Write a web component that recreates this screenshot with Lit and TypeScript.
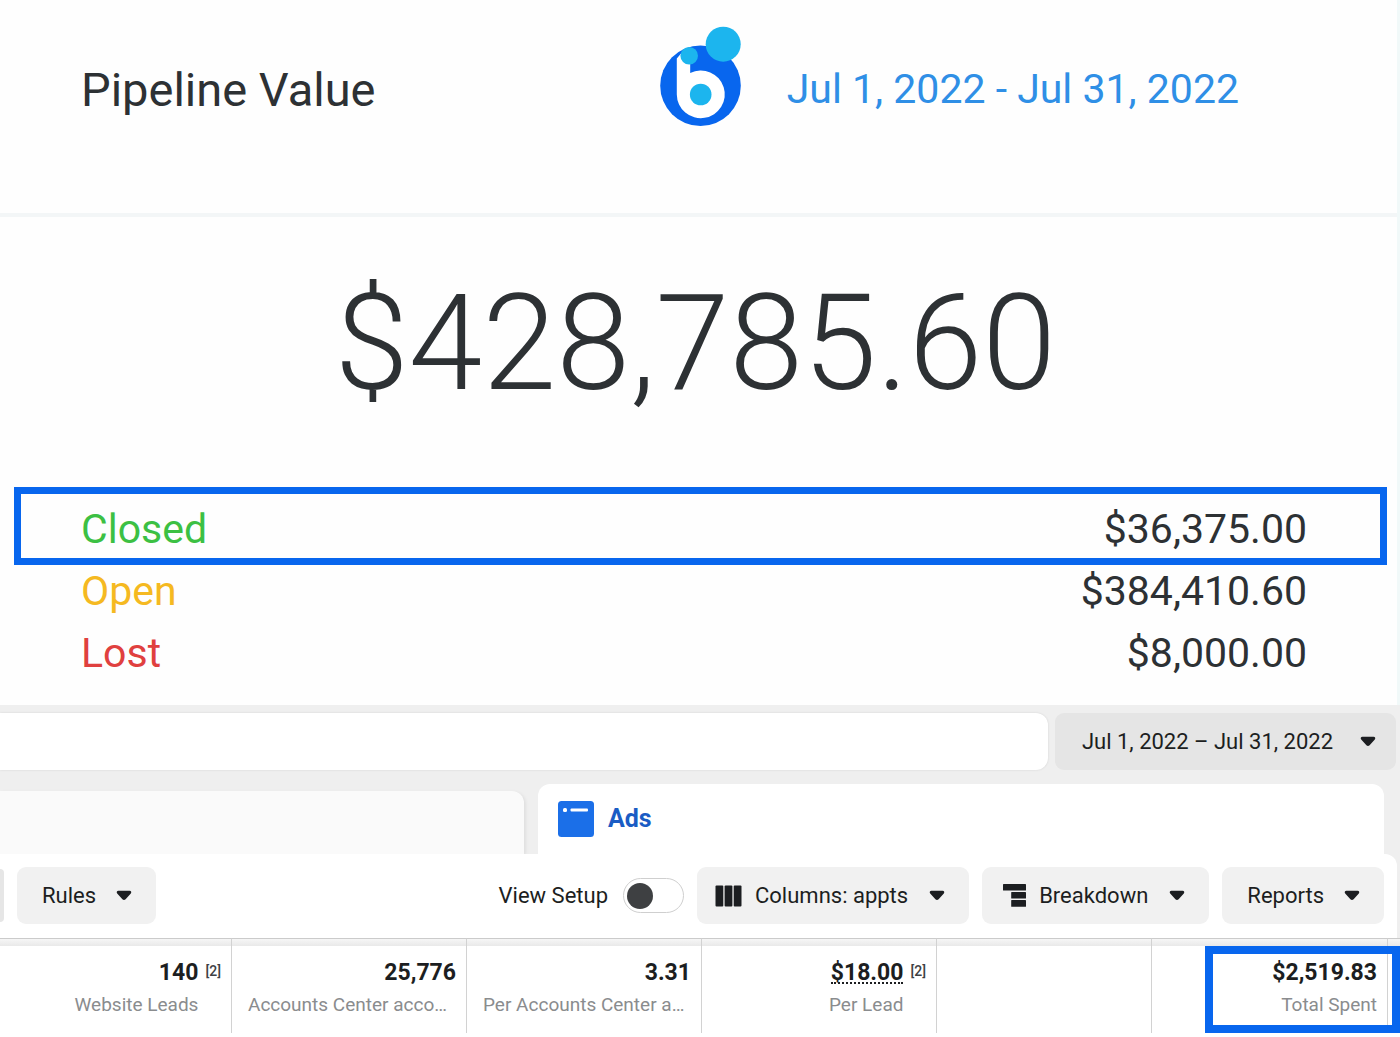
import { LitElement, html, css, svg, nothing } from "lit";
import { customElement, property } from "lit/decorators.js";

const caret = html`<svg class="caret" width="16" height="11" viewBox="0 0 16 11" aria-hidden="true">
  <path d="M2.4 0.8h11.2c1.6 0 2.2 1.5 1.2 2.6L9.6 9.2c-0.9 1-2.3 1-3.2 0L1.2 3.4C0.2 2.3 0.8 0.8 2.4 0.8z" fill="#1c1e21" />
</svg>`;

const columnsIcon = html`<svg width="27" height="22" viewBox="0 0 27 22" aria-hidden="true" fill="#1c1e21">
  <rect x="0.5" y="0.5" width="7.8" height="21" rx="1" />
  <rect x="9.6" y="0.5" width="7.8" height="21" rx="1" />
  <rect x="18.7" y="0.5" width="7.8" height="21" rx="1" />
</svg>`;

const breakdownIcon = html`<svg width="23" height="23" viewBox="0 0 23 23" aria-hidden="true" fill="#1c1e21">
  <rect x="0" y="0" width="23" height="6.6" rx="0.6" />
  <rect x="8.2" y="8" width="14.8" height="6.6" rx="0.6" />
  <rect x="8.2" y="16" width="14.8" height="6.8" rx="0.6" />
</svg>`;

const logo = svg`<svg width="81" height="100" viewBox="660 25 81 100" role="img" aria-label="b">
  <circle cx="700.5" cy="84.7" r="40.3" fill="#0866ee" />
  <path d="M676.8 57.5L681 52.5H690.2V72A24 23.8 0 1 1 676.8 93.5z" fill="#fff" />
  <circle cx="700.7" cy="93.5" r="10.8" fill="#1cb5ee" />
  <circle cx="689.2" cy="54.7" r="8.8" fill="#1cb5ee" />
  <circle cx="723.2" cy="43.2" r="17.5" fill="#1cb5ee" />
</svg>`;

@customElement("pipeline-card")
export class PipelineCard extends LitElement {
  static styles = css`
    :host {
      display: block;
      background: #fefefe;
      border-right: 3px solid #f1f9f9;
      color: #2d3134;
    }
    .head {
      display: flex;
      align-items: center;
      justify-content: space-between;
      box-sizing: border-box;
      height: 217px;
      padding: 0 158px 34px 81px;
      border-bottom: 4px solid #f3f6f7;
    }
    .title {
      margin: 0;
      font-size: 47px;
      line-height: 56px;
      font-weight: 400;
    }
    .period {
      display: flex;
      align-items: center;
      gap: 46px;
    }
    .logo {
      display: flex;
      padding-bottom: 28px;
    }
    .range {
      border: 0;
      padding: 0 0 2px;
      background: none;
      font: inherit;
      font-size: 41px;
      line-height: 48px;
      color: #2f8fe6;
    }
    .total {
      margin: 0;
      padding: 49px 6px 76px 0;
      font-size: 133px;
      line-height: 156px;
      font-weight: 300;
      text-align: center;
    }
    .rows {
      margin: 0;
      padding-bottom: 21px;
    }
    .row {
      position: relative;
      display: flex;
      justify-content: space-between;
      padding: 0 90px 0 81px;
      font-size: 41px;
      line-height: 62px;
    }
    .row.marked::after {
      content: "";
      position: absolute;
      top: -11px;
      right: 10px;
      bottom: -5px;
      left: 14px;
      border: 7px solid #0866ee;
      pointer-events: none;
    }
    dd {
      margin: 0;
    }
    .closed {
      color: #3cc043;
    }
    .open {
      color: #f5b921;
    }
    .lost {
      color: #e0403f;
    }
  `;

  render() {
    const rows = [
      { kind: "closed", label: "Closed", value: "$36,375.00", marked: true },
      { kind: "open", label: "Open", value: "$384,410.60", marked: false },
      { kind: "lost", label: "Lost", value: "$8,000.00", marked: false },
    ];
    return html`
      <header class="head">
        <h1 class="title">Pipeline Value</h1>
        <div class="period">
          <span class="logo">${logo}</span>
          <button class="range" type="button">Jul 1, 2022 - Jul 31, 2022</button>
        </div>
      </header>
      <p class="total">$428,785.60</p>
      <dl class="rows">
        ${rows.map(
          (r) => html`<div class="row ${r.marked ? "marked" : ""}">
            <dt class=${r.kind}>${r.label}</dt>
            <dd>${r.value}</dd>
          </div>`
        )}
      </dl>
    `;
  }
}

interface Metric {
  value?: string;
  label?: string;
  note?: string;
  dotted?: boolean;
  clipped?: boolean;
  marked?: boolean;
}

@customElement("ads-panel")
export class AdsPanel extends LitElement {
  @property({ attribute: false }) metrics: Metric[] = [
    { value: "140", label: "Website Leads", note: "[2]" },
    { value: "25,776", label: "Accounts Center acco…", clipped: true },
    { value: "3.31", label: "Per Accounts Center a…", clipped: true },
    { value: "$18.00", label: "Per Lead", note: "[2]", dotted: true },
    {},
    { value: "$2,519.83", label: "Total Spent", marked: true },
  ];

  static styles = css`
    :host {
      display: block;
      background: #efefef;
      color: #1c1e21;
      font-size: 22px;
      line-height: 28px;
    }
    button {
      border: 0;
      margin: 0;
      font: inherit;
      color: inherit;
    }
    .filters {
      display: flex;
      gap: 7px;
      padding: 8px 4px 14px 0;
    }
    .search {
      flex: 1;
      min-width: 0;
      box-sizing: border-box;
      height: 57px;
      padding: 0 20px;
      border: 0;
      border-radius: 0 12px 12px 0;
      background: #fff;
      box-shadow: 0 0 2px #cfcfcf;
      font: inherit;
    }
    .menu {
      display: flex;
      align-items: center;
      height: 57px;
      padding: 0 24px 0 25px;
      border-radius: 9px;
      background: #f1f1f1;
      white-space: nowrap;
    }
    .menu.dark {
      padding: 0 20px 0 27px;
      background: #e5e5e5;
    }
    .menu.iconed {
      padding-left: 18px;
    }
    .menu.wide {
      padding-left: 21px;
    }
    .menu svg {
      flex: none;
    }
    .icon {
      display: flex;
      margin-right: 13px;
    }
    .caret {
      margin-left: 20px;
    }
    .iconed .caret,
    .wide .caret {
      margin-left: 21px;
    }
    .dark .caret {
      margin-left: 27px;
    }
    .tabs {
      display: grid;
      grid-template-columns: 524fr 846fr;
      align-items: end;
      gap: 14px;
      padding-right: 16px;
    }
    .tab {
      box-sizing: border-box;
      height: 70px;
      border-radius: 12px 12px 0 0;
      background: #fff;
    }
    .tab.idle {
      height: 63px;
      border-radius: 0 12px 0 0;
      background: #fafafa;
      box-shadow: 2px 1px 3px #e0e0e0;
    }
    .tab.active {
      display: flex;
      align-items: center;
      gap: 14px;
      padding: 0 20px;
      font-size: 25px;
      font-weight: 700;
      color: #1a5cc4;
    }
    .sheet {
      position: relative;
      margin-right: 3px;
      border-radius: 0 12px 0 0;
      background: #fff;
    }
    .tools {
      display: flex;
      align-items: center;
      gap: 13px;
      padding: 13px 13px 14px 0;
    }
    .stub {
      width: 4px;
      height: 53px;
      border-radius: 0 6px 6px 0;
      background: #e6e6e6;
    }
    .setup {
      display: flex;
      align-items: center;
      gap: 15px;
      margin-left: auto;
    }
    .switch {
      appearance: none;
      display: flex;
      align-items: center;
      box-sizing: border-box;
      width: 61px;
      height: 35px;
      margin: 0;
      padding: 0 3px;
      border: 1px solid #cfcfcf;
      border-radius: 18px;
      background: #fff;
    }
    .switch::before {
      content: "";
      width: 26px;
      height: 26px;
      border-radius: 50%;
      background: #3e4042;
    }
    .switch:checked {
      justify-content: flex-end;
    }
    .grid {
      width: 100%;
      border-collapse: separate;
      border-spacing: 0;
      table-layout: fixed;
      background: #fff;
    }
    .c235 {
      width: 235px;
    }
    .c215 {
      width: 215px;
    }
    .c236 {
      width: 236px;
    }
    .c12 {
      width: 12px;
    }
    td {
      box-sizing: border-box;
      padding: 0;
      border-right: 1px solid #d2d2d2;
    }
    td:last-child {
      border-right: 0;
    }
    .rule td {
      height: 8px;
      border-top: 1px solid #cbcbcb;
      background: linear-gradient(#f6f6f6, #e9e9e9);
    }
    .data td {
      position: relative;
      height: 87px;
      padding-right: 10px;
      vertical-align: top;
    }
    .data td:last-child {
      padding-right: 0;
    }
    .metric {
      display: grid;
      grid-template-columns: auto auto;
      grid-template-rows: 28px auto;
      justify-content: end;
      column-gap: 7px;
      padding-top: 13px;
      text-align: right;
    }
    .metric.single {
      grid-template-columns: auto;
    }
    .metric.clipped {
      grid-template-columns: 1fr;
      padding-left: 16px;
    }
    .value {
      justify-self: end;
      font-size: 23px;
      line-height: 27px;
      font-weight: 700;
    }
    .dotted {
      box-sizing: border-box;
      height: 25px;
      border-bottom: 2px dotted #1c1e21;
    }
    .note {
      font-size: 14px;
      line-height: 24px;
      font-weight: 500;
      color: #3e4144;
    }
    .label {
      grid-column: 1;
      grid-row: 2;
      padding-top: 5px;
      font-size: 19px;
      line-height: 26px;
      color: #8a8c8e;
      white-space: nowrap;
    }
    .clipped .label {
      text-align: left;
    }
    .mark {
      position: absolute;
      right: -13px;
      top: 0;
      box-sizing: border-box;
      width: 195px;
      height: 87px;
      border: 8px solid #0866ee;
      pointer-events: none;
    }
  `;

  private cell(m: Metric) {
    if (!m.value) return html`<td></td>`;
    const shape = m.clipped ? "clipped" : m.note ? "" : "single";
    return html`<td>
      <div class="metric ${shape}">
        <span class="value ${m.dotted ? "dotted" : ""}">${m.value}</span>
        ${m.note ? html`<span class="note">${m.note}</span>` : nothing}
        <span class="label">${m.label}</span>
      </div>
      ${m.marked ? html`<div class="mark"></div>` : nothing}
    </td>`;
  }

  render() {
    return html`
      <div class="filters">
        <input class="search" type="search" aria-label="Search" />
        <button class="menu dark" type="button" aria-haspopup="true">Jul 1, 2022 – Jul 31, 2022${caret}</button>
      </div>
      <div class="tabs" role="tablist">
        <button class="tab idle" type="button" role="tab" aria-selected="false" aria-label="Ad sets"></button>
        <button class="tab active" type="button" role="tab" aria-selected="true">
          <svg width="36" height="36" viewBox="0 0 36 36" aria-hidden="true">
            <rect width="36" height="36" rx="3.5" fill="#1b6fe8" />
            <rect x="5" y="7" width="4" height="4" rx="1.5" fill="#fff" />
            <rect x="12.5" y="7.6" width="17.5" height="2.8" rx="1" fill="#fff" />
          </svg>
          Ads
        </button>
      </div>
      <div class="sheet">
        <div class="tools">
          <div class="stub"></div>
          <button class="menu" type="button" aria-haspopup="true">Rules${caret}</button>
          <div class="setup">
            <label for="setup">View Setup</label>
            <input class="switch" id="setup" type="checkbox" role="switch" />
          </div>
          <button class="menu iconed" type="button" aria-haspopup="true">
            <span class="icon">${columnsIcon}</span>Columns: appts${caret}
          </button>
          <button class="menu wide" type="button" aria-haspopup="true">
            <span class="icon">${breakdownIcon}</span>Breakdown${caret}
          </button>
          <button class="menu" type="button" aria-haspopup="true">Reports${caret}</button>
        </div>
      </div>
      <table class="grid">
        <colgroup>
          <col />
          <col class="c235" />
          <col class="c235" />
          <col class="c235" />
          <col class="c215" />
          <col class="c236" />
          <col class="c12" />
        </colgroup>
        <tbody>
          <tr class="rule">
            ${[...this.metrics, {}].map(() => html`<td></td>`)}
          </tr>
          <tr class="data">
            ${this.metrics.map((m) => this.cell(m))}
            <td></td>
          </tr>
        </tbody>
      </table>
    `;
  }
}

@customElement("app-root")
export class AppRoot extends LitElement {
  static styles = css`
    :host {
      display: block;
      min-height: 100vh;
      background: #fff;
      font-family: Roboto, "Liberation Sans", sans-serif;
    }
  `;

  render() {
    return html`<pipeline-card></pipeline-card><ads-panel></ads-panel>`;
  }
}
